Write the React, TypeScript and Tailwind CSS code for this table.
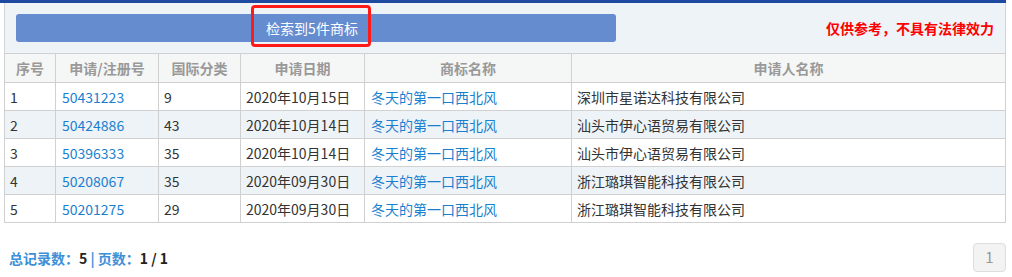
const rows = [
  { no: 1, reg: "50431223", cls: "9", date: "2020年10月15日", name: "冬天的第一口西北风", owner: "深圳市星诺达科技有限公司" },
  { no: 2, reg: "50424886", cls: "43", date: "2020年10月14日", name: "冬天的第一口西北风", owner: "汕头市伊心语贸易有限公司" },
  { no: 3, reg: "50396333", cls: "35", date: "2020年10月14日", name: "冬天的第一口西北风", owner: "汕头市伊心语贸易有限公司" },
  { no: 4, reg: "50208067", cls: "35", date: "2020年09月30日", name: "冬天的第一口西北风", owner: "浙江璐琪智能科技有限公司" },
  { no: 5, reg: "50201275", cls: "29", date: "2020年09月30日", name: "冬天的第一口西北风", owner: "浙江璐琪智能科技有限公司" },
];

const heads = ["序号", "申请/注册号", "国际分类", "申请日期", "商标名称", "申请人名称"];
const widths = ["w-[51px]", "w-[103px]", "w-[82px]", "w-[124px]", "w-[207px]", "w-[434px]"];

const App = () => {
  return (
    <div className="w-[1012px] h-[277px] bg-white text-[14px] text-[#333] font-['Noto_Sans_CJK_SC',sans-serif]">
      <div className="w-[1006px] h-[3px] bg-[#1d4aa0]" />

      <div className="ml-[4px] w-[1002px]">
        {/* result bar */}
        <div className="relative h-[50px] flex items-center justify-between pl-[11px] pr-[11px] bg-[#eef3f8] border-x border-[#d4d4d4]">
          <div className="w-[600px] h-[28px] rounded-[3px] bg-[#668cd0] flex items-center justify-center">
            <span className="text-white leading-none pr-[8px]">检索到5件商标</span>
          </div>
          <span className="font-bold text-[#ff0000] leading-none">仅供参考，不具有法律效力</span>
          <div className="absolute left-[246px] top-[2px] w-[120px] h-[42px] border-[3px] border-[#ff1a1a] rounded-[4px]" />
        </div>

        <table className="border-collapse table-fixed w-[1002px]">
          <thead>
            <tr className="h-[29px] bg-[#f5f6f6]">
              {heads.map((h, i) => (
                <th key={h} className={`${widths[i]} border border-[#d0d0d0] font-bold text-[#999] text-center leading-none`}>
                  {h}
                </th>
              ))}
            </tr>
          </thead>
          <tbody>
            {rows.map((r) => (
              <tr key={r.no} className={`h-[28px] ${r.no % 2 === 0 ? "bg-[#eef3f8]" : "bg-white"}`}>
                <td className="border border-[#d0d0d0] px-[5px] leading-none">{r.no}</td>
                <td className="border border-[#d0d0d0] px-[6px] leading-none text-[#1a7fcf]">{r.reg}</td>
                <td className="border border-[#d0d0d0] px-[5px] leading-none">{r.cls}</td>
                <td className="border border-[#d0d0d0] px-[5px] leading-none">{r.date}</td>
                <td className="border border-[#d0d0d0] px-[6px] leading-none text-[#1a7fcf]">{r.name}</td>
                <td className="border border-[#d0d0d0] px-[5px] leading-none">{r.owner}</td>
              </tr>
            ))}
          </tbody>
        </table>

        {/* paging */}
        <div className="flex items-center justify-between mt-[20px] pl-[5px]">
          <div className="leading-none font-bold text-[#3c8fd8]">
            总记录数：<span className="text-[#222]">5</span> | 页数：<span className="text-[#222]">1 / 1</span>
          </div>
          <div className="w-[33px] h-[29px] flex items-center justify-center rounded-[4px] border border-[#dddddd] bg-[#f3f3f3] text-[#999] text-[15px]">
            1
          </div>
        </div>
      </div>
    </div>
  );
};

export default App;
